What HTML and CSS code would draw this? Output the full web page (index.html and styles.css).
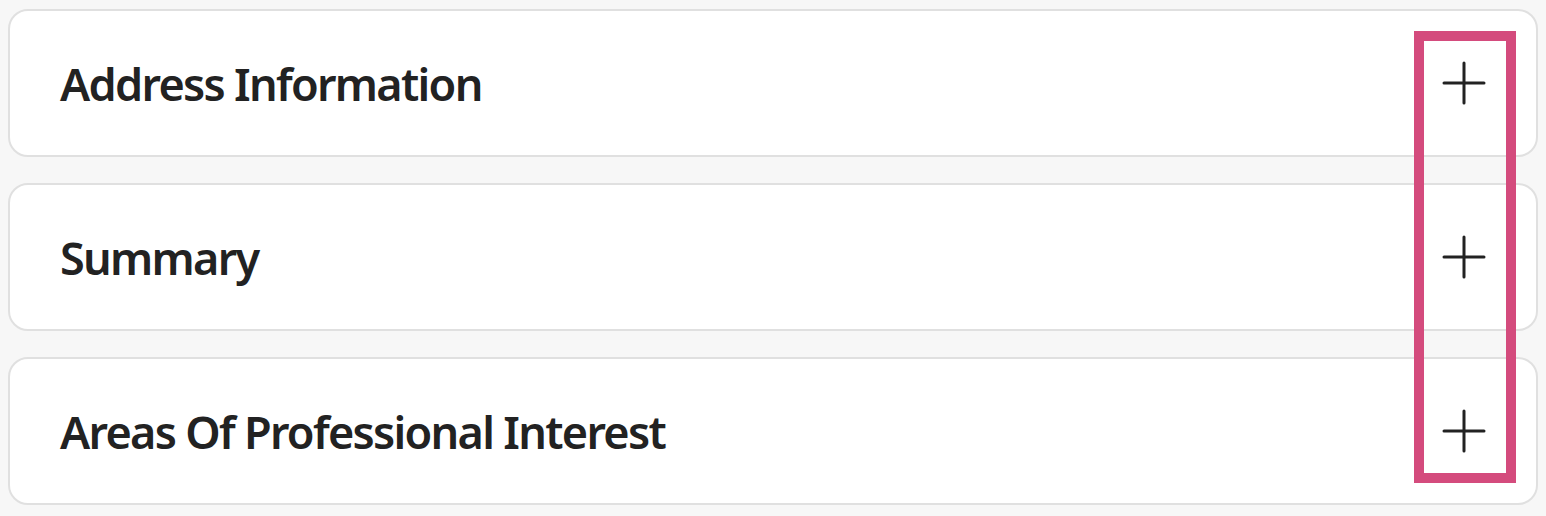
FILE: index.html
```html
<!DOCTYPE html>
<html lang="en">
<head>
<meta charset="UTF-8">
<meta name="viewport" content="width=device-width, initial-scale=1.0">
<title>Profile sections</title>
<link rel="stylesheet" href="styles.css">
</head>
<body>
  <div class="accordion">
    <div class="panel">
      <h3 class="panel-title">Address Information</h3>
      <span class="toggle">
        <svg width="44" height="44" viewBox="0 0 44 44"><path d="M22 2V42M2 22H42"/></svg>
      </span>
    </div>
    <div class="panel">
      <h3 class="panel-title">Summary</h3>
      <span class="toggle">
        <svg width="44" height="44" viewBox="0 0 44 44"><path d="M22 2V42M2 22H42"/></svg>
      </span>
    </div>
    <div class="panel">
      <h3 class="panel-title">Areas Of Professional Interest</h3>
      <span class="toggle">
        <svg width="44" height="44" viewBox="0 0 44 44"><path d="M22 2V42M2 22H42"/></svg>
      </span>
    </div>
  </div>

  <!-- highlight box round the toggles -->
  <div class="highlight"></div>
</body>
</html>
```

FILE: styles.css
```css
body {
  margin: 9px 8px 0 8px;
  background-color: #f7f7f7;
  font-family: "Noto Sans", "Open Sans", sans-serif;
  color: #222;
}

.accordion {
  display: flex;
  flex-direction: column;
  gap: 26px;
}

.panel {
  box-sizing: border-box;
  height: 148px;
  display: flex;
  align-items: center;
  justify-content: space-between;
  padding: 0 50px;
  background-color: #fff;
  border: 2px solid #e0e0e0;
  border-radius: 20px;
}

.panel-title {
  margin: 0;
  font-size: 45px;
  font-weight: 600;
  letter-spacing: -1.7px;
}

.toggle {
  display: flex;
}

.toggle path {
  fill: none;
  stroke: #222;
  stroke-width: 3;
  stroke-linecap: round;
}

.highlight {
  position: absolute;
  left: 1414px;
  top: 31px;
  width: 102px;
  height: 452px;
  box-sizing: border-box;
  border: 10px solid #d44b7d;
}
```
